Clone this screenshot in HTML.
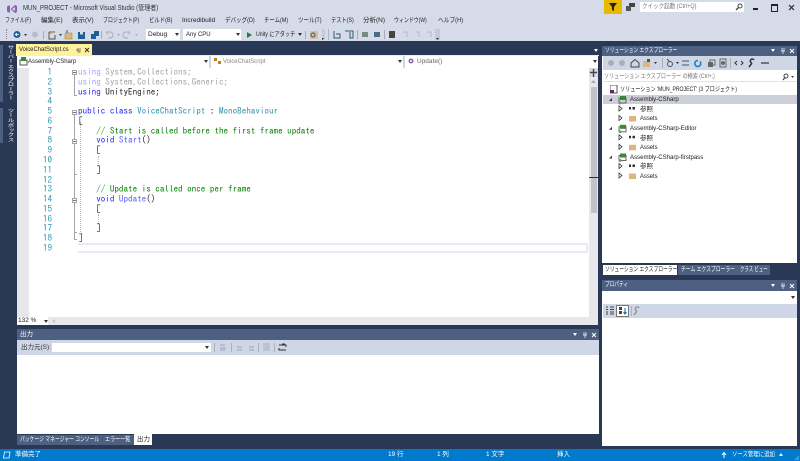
<!DOCTYPE html>
<html lang="ja"><head><meta charset="utf-8"><style>
html,body{margin:0;padding:0;background:#293955}
body{width:800px;height:461px;overflow:hidden;position:relative}
#r{position:absolute;left:0;top:0;width:800px;height:461px;overflow:hidden;background:#293955;font-family:"Liberation Sans","Noto Sans CJK JP",sans-serif;font-size:6.5px;color:#222;filter:blur(.3px)}
.a,.t,svg{position:absolute}
.t{white-space:nowrap;line-height:10px;height:10px;transform-origin:0 0}
.w{color:#fff}
.c{font-family:"IPAGothic","Liberation Mono",monospace;font-size:9.1px;color:#222;line-height:10px;height:10px;position:absolute;white-space:pre;left:78px}
.n{position:absolute;left:30px;width:22px;text-align:right;font-family:"IPAGothic",monospace;font-size:9.1px;line-height:10px;color:#2b91af}
.k{color:#1a1aff}.y{color:#2b91af}.g{color:#008000}.f{opacity:.42}
.m{position:absolute;left:73px;width:5px;height:5px;border:1px solid #a5a5a5;box-sizing:border-box;background:#fff}
.m:after{content:"";position:absolute;left:0;top:1px;width:3px;height:1px;background:#777}
.ln{position:absolute;background:#a5a5a5}
.dot{position:absolute;border-left:1px dotted #b8b8b8;width:0}
</style></head><body><div id="r">
<div class="a" style="left:0;top:0;width:800px;height:41px;background:#d6dbe9"></div>
<svg style="left:6px;top:3px" width="12" height="12" viewBox="0 0 12 12"><path d="M1 3.500 4 2v8L1 8.500zM4.500 6 9 2l2 1v6l-2 1z" fill="#8a5fb8"/><path d="M6 6 9 4v4z" fill="#d6dbe9"/></svg>
<div class="t" style="left:23px;top:4px;font-size:7px;color:#333;transform:scaleX(.86)">MUN_PROJECT - Microsoft Visual Studio (管理者)</div>
<div class="a" style="left:604px;top:0;width:18px;height:14px;background:#e8b900"></div>
<svg style="left:609px;top:3px" width="8" height="8"><path d="M0 0h8L5 4v4L3 7V4z" fill="#222"/></svg>
<svg style="left:626px;top:3px" width="9" height="9"><rect x="3" y="0" width="6" height="4" fill="#444"/><rect x="0" y="3" width="5" height="5" fill="#555"/></svg>
<div class="a" style="left:640px;top:2px;width:104px;height:10px;background:#fff"></div>
<div class="t" style="left:642px;top:2px;color:#777;transform:scaleX(.85)">クイック起動 (Ctrl+Q)</div>
<svg style="left:735px;top:3px" width="8" height="8"><circle cx="5" cy="3" r="2" fill="none" stroke="#444"/><path d="M3.500 4.500 1 7" stroke="#444" stroke-width="1.300"/></svg>
<div class="a" style="left:753px;top:8px;width:5px;height:1.500px;background:#222"></div>
<div class="a" style="left:771px;top:4px;width:5px;height:5px;border:1px solid #222;border-top-width:2px;box-sizing:content-box"></div>
<svg style="left:788px;top:4px" width="7" height="7"><path d="M1 1l5 5M6 1 1 6" stroke="#222" stroke-width="1.100"/></svg>

<div class="t" style="left:5px;top:16px;transform:scaleX(.76)">ファイル(F)</div>
<div class="t" style="left:41px;top:16px">編集(E)</div>
<div class="t" style="left:72px;top:16px">表示(V)</div>
<div class="t" style="left:103px;top:16px;transform:scaleX(.76)">プロジェクト(P)</div>
<div class="t" style="left:149px;top:16px;transform:scaleX(.83)">ビルド(B)</div>
<div class="t" style="left:182px;top:16px">Incredibuild</div>
<div class="t" style="left:225px;top:16px;transform:scaleX(.85)">デバッグ(D)</div>
<div class="t" style="left:264px;top:16px;transform:scaleX(.83)">チーム(M)</div>
<div class="t" style="left:298px;top:16px;transform:scaleX(.85)">ツール(T)</div>
<div class="t" style="left:331px;top:16px;transform:scaleX(.81)">テスト(S)</div>
<div class="t" style="left:363px;top:16px">分析(N)</div>
<div class="t" style="left:394px;top:16px;transform:scaleX(.76)">ウィンドウ(W)</div>
<div class="t" style="left:438px;top:16px;transform:scaleX(.88)">ヘルプ(H)</div>

<!-- toolbar -->
<div class="a" style="left:6px;top:29px;width:1px;height:10px;border-left:1px dotted #889"></div>
<svg style="left:13px;top:30px" width="320" height="10">
<circle cx="4" cy="4.500" r="3.500" fill="#1e5f96"/><path d="M2 4.500h4M4 3 2.500 4.500 4 6" stroke="#fff" fill="none" stroke-width=".8"/>
<path d="M11 4h3l-1.500 2z" fill="#333"/>
<circle cx="22" cy="4.500" r="3" fill="#b9bdc6"/>
<rect x="30" y="1" width="1" height="8" fill="#aab"/>
<path d="M36 2h6M36 2v7h6V5" fill="none" stroke="#555"/><path d="M38 1v3M37 2h3" stroke="#b08020"/>
<path d="M46 4h3l-1.500 2z" fill="#333"/>
<path d="M52 3h7v6h-7z" fill="#dcb67a" stroke="#b08020" stroke-width=".5"/><path d="M54 0v3" stroke="#1e5f96"/>
<rect x="65" y="2" width="7" height="7" fill="#1e5f96"/><rect x="67" y="2" width="3" height="2.500" fill="#d6dbe9"/>
<rect x="81" y="1" width="5" height="5" fill="#1e5f96"/><rect x="78" y="4" width="5" height="5" fill="#1e5f96"/>
<rect x="88" y="1" width="1" height="8" fill="#aab"/>
<path d="M93 2h4a3 3 0 0 1 0 6h-2M93 2l2 2.500" fill="none" stroke="#a9aeb8"/>
<path d="M104 4h3l-1.500 2z" fill="#a9aeb8"/>
<path d="M117 2h-4a3 3 0 0 0 0 6h2M117 2l-2 2.500" fill="none" stroke="#a9aeb8"/>
<path d="M122 4h3l-1.500 2z" fill="#a9aeb8"/>
<path d="M234 2l5 3-5 3z" fill="#2f7d32"/>
<rect x="292" y="1" width="1" height="8" fill="#aab"/>
<rect x="297" y="1" width="8" height="8" fill="#dcb67a" opacity=".8"/><circle cx="300" cy="5" r="2" fill="none" stroke="#1e5f96"/>
</svg>
<div class="a" style="left:146px;top:29px;width:34px;height:11px;background:#fff"></div>
<div class="t" style="left:148px;top:30px">Debug</div>
<svg style="left:175px;top:33px" width="5" height="4"><path d="M0 0h4L2 3z" fill="#333"/></svg>
<div class="a" style="left:183px;top:29px;width:58px;height:11px;background:#fff"></div>
<div class="t" style="left:186px;top:30px;transform:scaleX(.92)">Any CPU</div>
<svg style="left:236px;top:33px" width="5" height="4"><path d="M0 0h4L2 3z" fill="#333"/></svg>
<div class="t" style="left:256px;top:30px;transform:scaleX(.8)">Unity にアタッチ</div>
<svg style="left:298px;top:33px" width="5" height="4"><path d="M0 0h4L2 3z" fill="#333"/></svg>
<svg style="left:322px;top:29px" width="150" height="12">
<rect x="-2" y="0" width="5" height="11" fill="#c5cad8"/>
<path d="M-1 9h3L.5 11z" fill="#333"/>
<rect x="6" y="0" width="1" height="11" fill="#99a" opacity=".6"/>
<path d="M12 2v7h6V5h-4" fill="none" stroke="#2b5c7e"/>
<path d="M23 2h8v7h-3V3" fill="none" stroke="#2b5c7e"/>
<rect x="35" y="1" width="1" height="9" fill="#aab"/>
<rect x="40" y="3" width="6" height="5" fill="#7a8a80"/>
<rect x="52" y="3" width="6" height="5" fill="#4a6a80"/>
<rect x="62" y="1" width="1" height="9" fill="#aab"/>
<rect x="67" y="2" width="6" height="7" fill="#444"/>
<path d="M81 3h4v5M93 3h4v5M105 3h4v5" fill="none" stroke="#b4b9c4"/>
<rect x="113" y="0" width="5" height="11" fill="#c5cad8"/><path d="M114 9h3l-1.500 2z" fill="#333"/>
</svg>

<!-- doc well -->
<div class="a" style="left:16px;top:44px;width:76px;height:11px;background:#fff29d"></div>
<div class="t" style="left:19px;top:45px;transform:scaleX(.91)">VoiceChatScript.cs</div>
<svg style="left:75px;top:47px" width="16" height="7"><path d="M1 3h3M3 1v4h2V1" stroke="#555" fill="none" stroke-width=".7"/><path d="M10 1l4 4M14 1l-4 4" stroke="#333"/></svg>
<svg style="left:594px;top:49px" width="5" height="4"><path d="M0 0h4L2 3z" fill="#fff"/></svg>
<div class="a" style="left:16px;top:55px;width:583px;height:1px;background:#fff29d"></div>
<div class="a" style="left:17px;top:56px;width:581px;height:12px;background:#fff"></div>
<div class="a" style="left:209px;top:56px;width:2px;height:12px;background:#cfd6e5"></div>
<div class="a" style="left:403px;top:56px;width:2px;height:12px;background:#cfd6e5"></div>
<svg style="left:19px;top:57px" width="9" height="9"><rect x="1" y="3" width="7" height="5" fill="none" stroke="#555"/><rect x="2" y="0" width="5" height="4" fill="#388a34"/></svg>
<div class="t" style="left:28px;top:57px;transform:scaleX(.92)">Assembly-CSharp</div>
<svg style="left:204px;top:60px" width="5" height="4"><path d="M0 0h4L2 3z" fill="#333"/></svg>
<svg style="left:214px;top:58px" width="8" height="8"><rect x="0" y="0" width="3" height="3" fill="#c27d1a"/><rect x="4" y="3" width="3" height="3" fill="#c27d1a"/></svg>
<div class="t" style="left:223px;top:57px;color:#888;transform:scaleX(.92)">VoiceChatScript</div>
<svg style="left:398px;top:60px" width="5" height="4"><path d="M0 0h4L2 3z" fill="#333"/></svg>
<svg style="left:408px;top:58px" width="8" height="8"><circle cx="3" cy="3" r="2.500" fill="#8a5fb8"/><circle cx="3" cy="3" r="1" fill="#fff"/></svg>
<div class="t" style="left:417px;top:57px;color:#666">Update()</div>
<svg style="left:593px;top:60px" width="5" height="4"><path d="M0 0h4L2 3z" fill="#333"/></svg>

<!-- left rail -->
<div class="a" style="left:0;top:45px;width:3px;height:57px;background:#4d6082"></div>
<div class="a" style="left:0;top:108px;width:3px;height:35px;background:#4d6082"></div>
<div class="t w" style="left:4px;top:45px;writing-mode:vertical-rl;height:auto;line-height:10px;transform:scaleY(.69)">サーバー エクスプローラー</div>
<div class="t w" style="left:4px;top:108px;writing-mode:vertical-rl;height:auto;line-height:10px;transform:scaleY(.75)">ツールボックス</div>

<!-- editor -->
<div class="a" style="left:17px;top:68px;width:572px;height:249px;background:#fff"></div>
<div class="a" style="left:17px;top:68px;width:12px;height:249px;background:#e6e7e8"></div>
<div class="a" style="left:78px;top:243px;width:510px;height:10px;box-sizing:border-box;border:solid #eaeaf2;border-width:2px 2px 2px 0"></div>

<div class="n" style="top:68px">1</div><div class="n" style="top:77.800px">2</div><div class="n" style="top:87.600px">3</div><div class="n" style="top:97.300px">4</div><div class="n" style="top:107.100px">5</div><div class="n" style="top:116.900px">6</div><div class="n" style="top:126.700px">7</div><div class="n" style="top:136.400px">8</div><div class="n" style="top:146.200px">9</div><div class="n" style="top:156px">10</div><div class="n" style="top:165.800px">11</div><div class="n" style="top:175.600px">12</div><div class="n" style="top:185.300px">13</div><div class="n" style="top:195.100px">14</div><div class="n" style="top:204.900px">15</div><div class="n" style="top:214.700px">16</div><div class="n" style="top:224.400px">17</div><div class="n" style="top:234.200px">18</div><div class="n" style="top:244px">19</div>

<div class="m" style="top:70px;left:72px"></div>
<div class="ln" style="left:74px;top:75px;width:1px;height:20px"></div><div class="ln" style="left:74px;top:95px;width:3px;height:1px"></div>
<div class="m" style="top:110px;left:72px"></div>
<div class="ln" style="left:74px;top:115px;width:1px;height:124px"></div><div class="ln" style="left:74px;top:239px;width:3px;height:1px"></div>
<div class="m" style="top:139px;left:72px"></div>
<div class="m" style="top:198px;left:72px"></div>
<div class="ln" style="left:74px;top:174px;width:3px;height:1px"></div>
<div class="ln" style="left:74px;top:232px;width:3px;height:1px"></div>
<div class="dot" style="left:80px;top:122px;height:110px"></div>
<div class="dot" style="left:98px;top:156px;height:10px"></div>
<div class="dot" style="left:98px;top:214px;height:10px"></div>

<div class="c" style="top:68px"><span class="f"><span class="k">using</span> System.Collections;</span></div>
<div class="c" style="top:77.800px"><span class="f"><span class="k">using</span> System.Collections.Generic;</span></div>
<div class="c" style="top:87.600px"><span class="k">using</span> UnityEngine;</div>
<div class="c" style="top:107.100px"><span class="k">public class</span> <span class="y">VoiceChatScript</span> : <span class="y">MonoBehaviour</span></div>
<div class="c" style="top:116.900px;left:78.500px">[</div>
<div class="c" style="top:126.700px">    <span class="g">// Start is called before the first frame update</span></div>
<div class="c" style="top:136.400px">    <span class="k">void</span> <span class="k" style="opacity:.75">Start</span>()</div>
<div class="c" style="top:146.200px">    [</div>
<div class="c" style="top:165.800px">    ]</div>
<div class="c" style="top:185.300px">    <span class="g">// Update is called once per frame</span></div>
<div class="c" style="top:195.100px">    <span class="k">void</span> <span class="k" style="opacity:.75">Update</span>()</div>
<div class="c" style="top:204.900px">    [</div>
<div class="c" style="top:224.400px">    ]</div>
<div class="c" style="top:234.200px;left:78.500px">]</div>

<!-- v scrollbar -->
<div class="a" style="left:589px;top:68px;width:9px;height:249px;background:#e8e8ec"></div>
<div class="a" style="left:589px;top:68px;width:9px;height:9px;background:#d6dbe9"></div>
<svg style="left:590px;top:69px" width="8" height="8"><path d="M3.500 0v8M0 3.500h7" stroke="#444" stroke-width="1.400"/></svg>
<svg style="left:591px;top:80px" width="6" height="4"><path d="M0 3h5L2.500 0z" fill="#aaa"/></svg>
<div class="a" style="left:591px;top:87px;width:6px;height:126px;background:#c2c3c9"></div>
<div class="a" style="left:589px;top:177px;width:9px;height:1px;background:#2020d0"></div>
<!-- h bar -->
<div class="a" style="left:17px;top:317px;width:581px;height:8px;background:#e8e8ec"></div>
<div class="a" style="left:17px;top:317px;width:31px;height:8px;background:#fff"></div>
<div class="t" style="left:18px;top:316px">132 %</div>
<svg style="left:44px;top:320px" width="4" height="3"><path d="M0 0h4L2 3z" fill="#333"/></svg>
<svg style="left:52px;top:319px" width="4" height="5"><path d="M3 0v4L0 2z" fill="#c5c5c8"/></svg>

<!-- output -->
<div class="a" style="left:17px;top:329px;width:582px;height:11px;background:#4d6082"></div>
<div class="t w" style="left:20px;top:330px">出力</div>
<svg style="left:573px;top:332px" width="24" height="6"><path d="M0 1h4L2 4z" fill="#fff"/><path d="M11 0v3h2V0M10 3h4M12 3v3" stroke="#fff" fill="none" stroke-width=".7"/><path d="M19 1l4 4M23 1l-4 4" stroke="#fff"/></svg>
<div class="a" style="left:17px;top:340px;width:582px;height:15px;background:#cfd6e5"></div>
<div class="t" style="left:21px;top:343px;color:#333">出力元(S):</div>
<div class="a" style="left:52px;top:343px;width:159px;height:9px;background:#fff"></div>
<svg style="left:205px;top:346px" width="5" height="4"><path d="M0 0h4L2 3z" fill="#333"/></svg>
<svg style="left:214px;top:343px" width="80" height="10">
<rect x="0" y="0" width="1" height="9" fill="#a9b0c0"/>
<path d="M6 2h5M6 5h6M6 7h5" stroke="#9aa3b5"/>
<rect x="17" y="0" width="1" height="9" fill="#a9b0c0"/>
<path d="M23 4h5M23 7h5M35 4h5M35 7h5" stroke="#9aa3b5"/>
<rect x="44" y="0" width="1" height="9" fill="#a9b0c0"/>
<path d="M49 1h7M49 3h7M49 5h7M49 7h7" stroke="#9aa3b5" stroke-width=".8"/>
<rect x="60" y="0" width="1" height="9" fill="#a9b0c0"/>
<path d="M65 2h7v2M72 7h-7V5" fill="none" stroke="#333"/><path d="M68 1h3M66 7h3" stroke="#333"/>
</svg>
<div class="a" style="left:17px;top:355px;width:582px;height:79px;background:#fff"></div>
<!-- bottom tabs -->
<div class="a" style="left:17px;top:435px;width:117px;height:10px;background:#4d6082"></div>
<div class="t w" style="left:20px;top:435px;transform:scaleX(.74)">パッケージ マネージャー コンソール</div>
<div class="t w" style="left:105px;top:435px;transform:scaleX(.78)">エラー一覧</div>
<div class="a" style="left:134px;top:434px;width:18px;height:11px;background:#fff"></div>
<div class="t" style="left:137px;top:435px">出力</div>

<!-- solution explorer -->
<div class="a" style="left:602px;top:46px;width:195px;height:10px;background:#4d6082"></div>
<div class="t w" style="left:605px;top:46px;transform:scaleX(.73)">ソリューション エクスプローラー</div>
<svg style="left:771px;top:48px" width="24" height="6"><path d="M0 1h4L2 4z" fill="#fff"/><path d="M11 0v3h2V0M10 3h4M12 3v3" stroke="#fff" fill="none" stroke-width=".7"/><path d="M19 1l4 4M23 1l-4 4" stroke="#fff"/></svg>
<div class="a" style="left:602px;top:56px;width:195px;height:207px;background:#fff"></div>
<div class="a" style="left:603px;top:56px;width:194px;height:14px;background:#cfd6e5"></div>
<svg style="left:606px;top:58px" width="165" height="10">
<circle cx="5" cy="5" r="3" fill="#a9afbd"/><circle cx="16" cy="5" r="3" fill="#a9afbd"/>
<path d="M25 5l4-3.500 4 3.500v4h-8z" fill="none" stroke="#444"/>
<rect x="37" y="3" width="7" height="6" fill="#dcb67a"/><rect x="41" y="1" width="3" height="3" fill="#1e5f96"/>
<path d="M48 4h3l-1.500 2z" fill="#333"/>
<rect x="56" y="0" width="1" height="10" fill="#a9b0c0"/>
<circle cx="64" cy="6" r="2.500" fill="none" stroke="#555"/><path d="M61 1l3 3" stroke="#555"/>
<path d="M70 4h3l-1.500 2z" fill="#333"/>
<path d="M76 3h7M76 7h7" stroke="#2b5c7e"/>
<path d="M92 2.500a3 3 0 1 0 2 1" fill="none" stroke="#1e7ac0" stroke-width="1.500"/>
<rect x="102" y="4" width="5" height="5" fill="#666"/><rect x="104" y="2" width="5" height="5" fill="none" stroke="#666"/>
<rect x="114" y="1" width="6" height="8" fill="none" stroke="#666"/><circle cx="117" cy="5" r="2" fill="#666"/>
<rect x="124" y="0" width="1" height="10" fill="#a9b0c0"/>
<path d="M131 3l-2 2 2 2M135 3l2 2-2 2" fill="none" stroke="#333"/>
<path d="M143 9l3-4M146 5a2 2 0 1 1 2-3" stroke="#333" fill="none" stroke-width="1.500"/>
<path d="M155 5h8" stroke="#333" stroke-width="1.200"/>
</svg>
<div class="a" style="left:603px;top:72px;width:194px;height:10px;background:#fff;border-bottom:1px solid #e0e2ea;box-sizing:border-box"></div>
<div class="t" style="left:604px;top:72px;color:#777;transform:scaleX(.78)">ソリューション エクスプローラー の検索 (Ctrl+;)</div>
<svg style="left:782px;top:73px" width="14" height="8"><circle cx="4" cy="3" r="2" fill="none" stroke="#444"/><path d="M3 4.500 1 7" stroke="#444" stroke-width="1.200"/><path d="M9 3h3l-1.500 2z" fill="#444"/></svg>

<svg style="left:610px;top:85px" width="8" height="9"><rect x="0" y="0" width="7" height="8" fill="none" stroke="#555"/><rect x="0" y="5" width="4" height="3" fill="#68217a"/></svg>
<div class="t" style="left:620px;top:85px;transform:scaleX(.785)">ソリューション 'MUN_PROJECT' (3 プロジェクト)</div>
<div class="a" style="left:603px;top:95px;width:194px;height:9px;background:#ccced8"></div>
<svg style="left:603px;top:86px" width="60" height="100" overflow="visible">
<g>
<g transform="translate(0,2)"><path d="M6 13h3v-3z" fill="#333"/><rect x="16" y="10" width="7" height="5" fill="none" stroke="#666"/><rect x="17" y="8" width="6" height="4" fill="#388a34"/><circle cx="17" cy="15" r="1.500" fill="#888"/></g>
<path d="M16 20v5l3-2.500zM16 29.500v5l3-2.500z" fill="none" stroke="#333" stroke-width=".8"/>
<rect x="26" y="21" width="2" height="2.500" fill="#333"/><rect x="29.500" y="21" width="2.500" height="2.500" fill="#333"/>
<path d="M26 30h7v5.500h-7z" fill="#dcb67a"/></g>
<g transform="translate(0,28.800)">
<g transform="translate(0,2)"><path d="M6 13h3v-3z" fill="#333"/><rect x="16" y="10" width="7" height="5" fill="none" stroke="#666"/><rect x="17" y="8" width="6" height="4" fill="#388a34"/><circle cx="17" cy="15" r="1.500" fill="#888"/></g>
<path d="M16 20v5l3-2.500zM16 29.500v5l3-2.500z" fill="none" stroke="#333" stroke-width=".8"/>
<rect x="26" y="21" width="2" height="2.500" fill="#333"/><rect x="29.500" y="21" width="2.500" height="2.500" fill="#333"/>
<path d="M26 30h7v5.500h-7z" fill="#dcb67a"/></g>
<g transform="translate(0,57.500)">
<g transform="translate(0,2)"><path d="M6 13h3v-3z" fill="#333"/><rect x="16" y="10" width="7" height="5" fill="none" stroke="#666"/><rect x="17" y="8" width="6" height="4" fill="#388a34"/><circle cx="17" cy="15" r="1.500" fill="#888"/></g>
<path d="M16 20v5l3-2.500zM16 29.500v5l3-2.500z" fill="none" stroke="#333" stroke-width=".8"/>
<rect x="26" y="21" width="2" height="2.500" fill="#333"/><rect x="29.500" y="21" width="2.500" height="2.500" fill="#333"/>
<path d="M26 30h7v5.500h-7z" fill="#dcb67a"/></g>
</svg>
<div class="t" style="left:630px;top:95px;transform:scaleX(.93)">Assembly-CSharp</div>
<div class="t" style="left:640px;top:105px">参照</div>
<div class="t" style="left:640px;top:114px;transform:scaleX(.9)">Assets</div>
<div class="t" style="left:630px;top:124px;transform:scaleX(.93)">Assembly-CSharp-Editor</div>
<div class="t" style="left:640px;top:134px">参照</div>
<div class="t" style="left:640px;top:143px;transform:scaleX(.9)">Assets</div>
<div class="t" style="left:630px;top:153px;transform:scaleX(.93)">Assembly-CSharp-firstpass</div>
<div class="t" style="left:640px;top:162px">参照</div>
<div class="t" style="left:640px;top:172px;transform:scaleX(.9)">Assets</div>

<!-- right tabs -->
<div class="a" style="left:603px;top:265px;width:74px;height:10px;background:#fff"></div>
<div class="t" style="left:605px;top:265px;transform:scaleX(.73)">ソリューション エクスプローラー</div>
<div class="a" style="left:678px;top:265px;width:92px;height:10px;background:#4d6082"></div>
<div class="t w" style="left:681px;top:265px;transform:scaleX(.74)">チーム エクスプローラー</div>
<div class="t w" style="left:740px;top:265px;transform:scaleX(.68)">クラス ビュー</div>

<!-- properties -->
<div class="a" style="left:602px;top:280px;width:195px;height:11px;background:#4d6082"></div>
<div class="t w" style="left:605px;top:280px;transform:scaleX(.72)">プロパティ</div>
<svg style="left:771px;top:283px" width="24" height="6"><path d="M0 1h4L2 4z" fill="#fff"/><path d="M11 0v3h2V0M10 3h4M12 3v3" stroke="#fff" fill="none" stroke-width=".7"/><path d="M19 1l4 4M23 1l-4 4" stroke="#fff"/></svg>
<div class="a" style="left:602px;top:291px;width:195px;height:155px;background:#fff"></div>
<svg style="left:791px;top:296px" width="5" height="4"><path d="M0 0h4L2 3z" fill="#333"/></svg>
<div class="a" style="left:603px;top:304px;width:194px;height:14px;background:#cfd6e5"></div>
<div class="a" style="left:616px;top:305px;width:13px;height:12px;background:#fff;border:1px solid #777;box-sizing:border-box"></div>
<svg style="left:605px;top:306px" width="40" height="10"><path d="M1 1h2M1 3.500h2M1 6h2M1 8h2M5 1h4M5 3.500h4M5 6h4M5 8h4" stroke="#444" stroke-width="1.100"/><path d="M14 1h3v3h-3zM14 5h3v3h-3z" fill="#444"/><path d="M20 2v6M18.500 6l1.500 2 1.500-2" stroke="#1e5f96" fill="none"/><rect x="26" y="0" width="1" height="10" fill="#a9b0c0"/><path d="M29 9l3-4M32 5a2 2 0 1 1 2-3" stroke="#9a9aa0" fill="none" stroke-width="1.500"/></svg>

<!-- status -->
<div class="a" style="left:0;top:449px;width:800px;height:12px;background:#007acc"></div>
<svg style="left:2px;top:451px" width="9" height="8"><path d="M2.500 1h5.500l-1 6h-5.500z" fill="none" stroke="#fff" stroke-width=".8"/></svg>
<div class="t w" style="left:15px;top:450px">準備完了</div>
<div class="t w" style="left:388px;top:450px">19 行</div>
<div class="t w" style="left:437px;top:450px">1 列</div>
<div class="t w" style="left:486px;top:450px">1 文字</div>
<div class="t w" style="left:557px;top:450px">挿入</div>
<svg style="left:721px;top:451px" width="6" height="8"><path d="M3 7V2M1 4l2-2.500L5 4" stroke="#fff" fill="none"/></svg>
<div class="t w" style="left:732px;top:450px;transform:scaleX(.83)">ソース管理に追加</div>
<svg style="left:779px;top:453px" width="5" height="4"><path d="M0 3h4L2 0z" fill="#fff"/></svg>
<svg style="left:794px;top:455px" width="5" height="5"><path d="M0 5 5 0v5z" fill="#3d9ad8"/></svg>
</div></body></html>
